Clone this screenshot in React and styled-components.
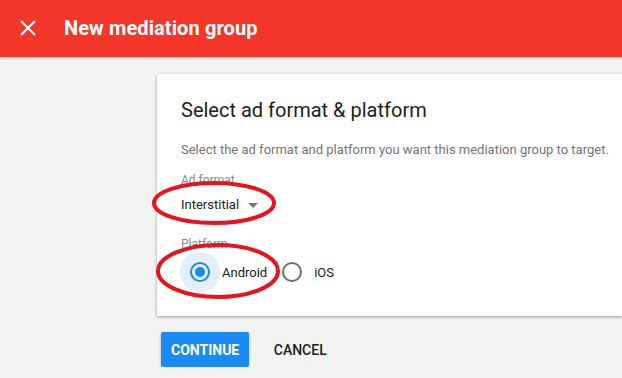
import React from "react";
import styled, { createGlobalStyle } from "styled-components";

const GlobalStyle = createGlobalStyle`
  body {
    margin: 0;
    background: #f3f3f2;
    font-family: Roboto, "Liberation Sans", Arial, sans-serif;
    overflow: hidden;
  }
`;

const Header = styled.header`
  display: flex;
  align-items: center;
  height: 57px;
  padding: 0 0 2px 20px;
  box-sizing: border-box;
  background: #f4352a;
  color: #fff;
  box-shadow: 0 1px 2px rgba(0, 0, 0, 0.2);
`;

const CloseButton = styled.span`
  display: flex;
  width: 16px;
  height: 16px;
  margin-right: 28px;
`;

const Title = styled.h1`
  margin: 0;
  font-size: 20px;
  font-weight: 700;
  letter-spacing: 0.1px;
`;

const Main = styled.main`
  padding: 17px 0 0 157px;
`;

const Card = styled.section`
  position: relative;
  padding: 22px 0 24px 24px;
  background: #fff;
  box-shadow: 0 1px 3px rgba(0, 0, 0, 0.35);
`;

const CardTitle = styled.h2`
  margin: 0;
  font-size: 20px;
  line-height: 28px;
  font-weight: 400;
  color: #212121;
`;

const Lead = styled.p`
  margin: 16px 0 0;
  font-size: 13px;
  line-height: 20px;
  color: #757575;
`;

const FieldLabel = styled.div`
  margin-top: ${(p) => p.$gap}px;
  font-size: 12px;
  line-height: 16px;
  color: #8a8a8a;
`;

const Select = styled.div`
  display: inline-flex;
  align-items: center;
  gap: 9px;
  margin-top: 7px;
  padding-bottom: 5px;
  font-size: 13px;
  line-height: 20px;
  color: #212121;
  border-bottom: 1px solid #e6e6e6;
`;

const Caret = styled.span`
  width: 0;
  height: 0;
  border-left: 5px solid transparent;
  border-right: 5px solid transparent;
  border-top: 5px solid #757575;
  margin-right: 8px;
`;

const Block = styled.div`
  display: flex;
`;

const RadioGroup = styled.div`
  display: flex;
  align-items: center;
  margin-left: -1px;
`;

const Option = styled.label`
  display: flex;
  align-items: center;
  gap: 2px;
  margin-right: 5px;
  font-size: 13px;
  color: #212121;
`;

const Halo = styled.span`
  display: flex;
  align-items: center;
  justify-content: center;
  width: 40px;
  height: 40px;
  border-radius: 50%;
  background: ${(p) => (p.$on ? "#e3effc" : "transparent")};
`;

const Ring = styled.span`
  display: flex;
  align-items: center;
  justify-content: center;
  width: 20px;
  height: 20px;
  box-sizing: border-box;
  border-radius: 50%;
  border: 2px solid ${(p) => (p.$on ? "#1a8af5" : "#6e6e6e")};

  &::after {
    content: "";
    display: ${(p) => (p.$on ? "block" : "none")};
    width: 10px;
    height: 10px;
    border-radius: 50%;
    background: #1a8af5;
  }
`;

const Mark = styled.svg`
  position: absolute;
  left: ${(p) => p.$x}px;
  top: ${(p) => p.$y}px;
  overflow: visible;
  pointer-events: none;
`;

const Actions = styled.div`
  display: flex;
  align-items: center;
  gap: 7px;
  margin: 16px 0 0 4px;
`;

const Button = styled.button`
  height: 35px;
  padding: 0 ${(p) => (p.$primary ? 10 : 16)}px;
  min-width: 88px;
  border: 0;
  border-radius: 2px;
  font-family: inherit;
  font-size: 14px;
  font-weight: ${(p) => (p.$primary ? 700 : 500)};
  color: ${(p) => (p.$primary ? "#fff" : "#212121")};
  background: ${(p) => (p.$primary ? "#1a8af5" : "transparent")};
  box-shadow: ${(p) => (p.$primary ? "0 1px 3px rgba(0,0,0,0.3)" : "none")};
`;

const Ellipse = ({ x, y, w, h }) => (
  <Mark $x={x} $y={y} width={w} height={h}>
    <ellipse cx={w / 2} cy={h / 2} rx={w / 2 - 2} ry={h / 2 - 2} fill="none" stroke="#e8131e" strokeWidth="4" />
  </Mark>
);

const Radio = ({ label, on }) => (
  <Option>
    <Halo $on={on}>
      <Ring $on={on} />
    </Halo>
    {label}
  </Option>
);

export default function App() {
  return (
    <>
      <GlobalStyle />
      <Header>
        <CloseButton>
          <svg width="16" height="16" viewBox="0 0 16 16">
            <path d="M1 1L15 15M15 1L1 15" stroke="#fff" strokeWidth="2.2" />
          </svg>
        </CloseButton>
        <Title>New mediation group</Title>
      </Header>
      <Main>
        <Card>
          <CardTitle>Select ad format &amp; platform</CardTitle>
          <Lead>Select the ad format and platform you want this mediation group to target.</Lead>
          <FieldLabel $gap={12}>Ad format</FieldLabel>
          <Block>
            <Select>
              Interstitial
              <Caret />
            </Select>
          </Block>
          <FieldLabel $gap={15}>Platform</FieldLabel>
          <RadioGroup>
            <Radio label="Android" on />
            <Radio label="iOS" />
          </RadioGroup>
          <Ellipse x={-5} y={107} w={124} h={44} />
          <Ellipse x={-1} y={169} w={124} h={56} />
        </Card>
        <Actions>
          <Button $primary>CONTINUE</Button>
          <Button>CANCEL</Button>
        </Actions>
      </Main>
    </>
  );
}
